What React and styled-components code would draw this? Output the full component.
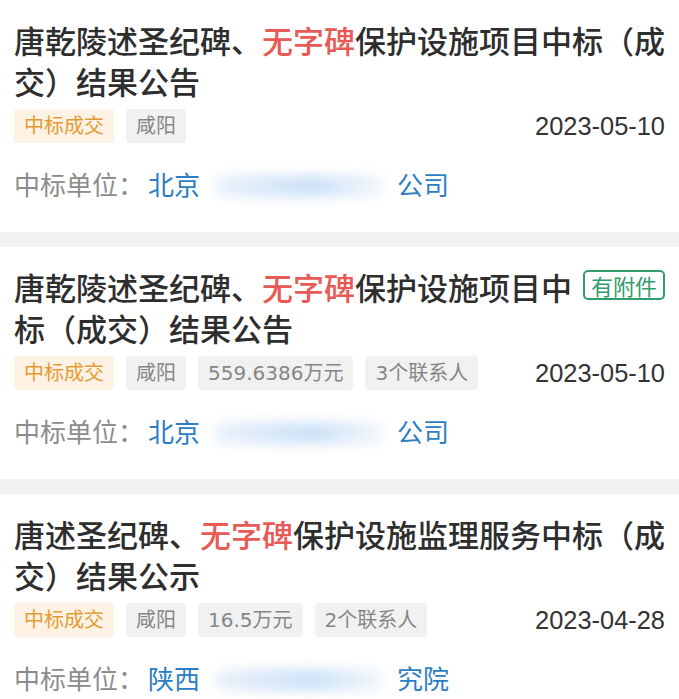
import React from "react";
import styled, { createGlobalStyle } from "styled-components";

const Global = createGlobalStyle`
  html, body { margin: 0; padding: 0; background: #ffffff; }
  body { font-family: "DejaVu Sans", "Noto Sans CJK SC", sans-serif; }
`;

const List = styled.div`
  display: flex;
  flex-direction: column;
  gap: 15px;
  background: #f2f2f2;
`;

const Card = styled.div`
  background: #ffffff;
  padding: 19px 14px 30px;
`;

const Title = styled.div`
  font-family: "Noto Sans CJK SC", sans-serif;
  font-size: 31px;
  line-height: 41px;
  font-weight: 500;
  color: #2e2e2e;
`;

const Hl = styled.span`
  color: #e85a55;
`;

const Attach = styled.span`
  float: right;
  margin: 4px 0 0 9px;
  box-sizing: border-box;
  height: 30px;
  width: 82px;
  border: 2px solid #2f9d6c;
  border-radius: 5px;
  color: #2f9d6c;
  font-size: 22px;
  line-height: 26px;
  font-weight: 400;
  text-align: center;
`;

const MetaRow = styled.div`
  display: flex;
  align-items: center;
  justify-content: space-between;
  margin-top: 8px;
`;

const Tags = styled.div`
  display: flex;
  gap: 12px;
`;

const Tag = styled.span`
  height: 34px;
  line-height: 34px;
  padding: 0 10px;
  border-radius: 4px;
  font-family: "DejaVu Sans", "Noto Sans CJK SC", sans-serif;
  font-size: 20px;
  color: ${(p) => (p.$tone === "orange" ? "#e59b33" : "#868686")};
  background: ${(p) => (p.$tone === "orange" ? "#fdf2e3" : "#f1f1f1")};
  white-space: nowrap;
`;

const DateText = styled.span`
  font-family: "Liberation Sans", sans-serif;
  font-size: 25.4px;
  color: #333333;
`;

const Winner = styled.div`
  margin-top: 23px;
  font-family: "Noto Sans CJK SC", sans-serif;
  font-size: 26px;
  line-height: 36px;
  color: #8c8c8c;
  white-space: nowrap;
`;

const Blue = styled.span`
  color: #2b7ec2;
  margin-left: ${(p) => p.$ml || 0}px;
`;

const Redacted = styled.span`
  display: inline-block;
  vertical-align: middle;
  width: 170px;
  height: 22px;
  margin: 0 13px 4px 14px;
  border-radius: 11px;
  background: linear-gradient(
    90deg,
    rgba(170, 205, 240, 0.25),
    rgba(150, 190, 235, 0.4) 40%,
    rgba(140, 185, 235, 0.42) 60%,
    rgba(170, 205, 240, 0.3) 85%,
    rgba(190, 215, 240, 0.2)
  );
  filter: blur(6px);
`;

const data = [
  {
    pre: "唐乾陵述圣纪碑、",
    hl: "无字碑",
    post: "保护设施项目中标（成交）结果公告",
    attach: false,
    tags: ["咸阳"],
    date: "2023-05-10",
    head: "北京",
    tail: "公司",
  },
  {
    pre: "唐乾陵述圣纪碑、",
    hl: "无字碑",
    post: "保护设施项目中标（成交）结果公告",
    attach: true,
    tags: ["咸阳", "559.6386万元", "3个联系人"],
    date: "2023-05-10",
    head: "北京",
    tail: "公司",
  },
  {
    pre: "唐述圣纪碑、",
    hl: "无字碑",
    post: "保护设施监理服务中标（成交）结果公示",
    attach: false,
    tags: ["咸阳", "16.5万元", "2个联系人"],
    date: "2023-04-28",
    head: "陕西",
    tail: "究院",
  },
];

export default function App() {
  return (
    <>
      <Global />
      <List>
        {data.map((d, i) => (
          <Card key={i}>
            <Title>
              {d.attach && <Attach>有附件</Attach>}
              {d.pre}
              <Hl>{d.hl}</Hl>
              {d.post}
            </Title>
            <MetaRow>
              <Tags>
                <Tag $tone="orange">中标成交</Tag>
                {d.tags.map((t) => (
                  <Tag key={t}>{t}</Tag>
                ))}
              </Tags>
              <DateText>{d.date}</DateText>
            </MetaRow>
            <Winner>
              中标单位：<Blue $ml={4}>{d.head}</Blue>
              <Redacted />
              <Blue>{d.tail}</Blue>
            </Winner>
          </Card>
        ))}
      </List>
    </>
  );
}
